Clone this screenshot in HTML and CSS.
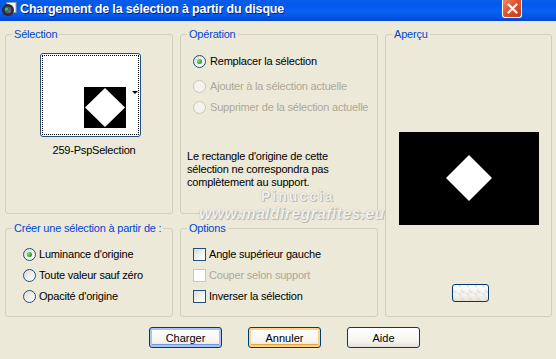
FILE: index.html
```html
<!DOCTYPE html>
<html lang="fr">

<head>
    <meta charset="utf-8">
    <link rel="stylesheet" href="styles.css">
</head>

<body>
    <div class="titlebar">
        <svg class="app-icon" width="16" height="16" viewBox="0 0 16 16">
            <rect x="6" y="1.5" width="9" height="10" fill="#fff" stroke="#9a9a9a" />
            <circle cx="7" cy="9" r="6" fill="#2a2a2a" />
            <circle cx="7" cy="9" r="3.5" fill="#3d5a8a" />
            <circle cx="5.5" cy="8" r="1.6" fill="#4fc04f" />
            <circle cx="8.5" cy="10.5" r="1.3" fill="#e04040" />
        </svg>
        <span class="title">Chargement de la sélection à partir du disque</span>
        <div class="close-btn">
            <svg width="11" height="11" viewBox="0 0 11 11">
                <path d="M1.5 1.5 L9.5 9.5 M9.5 1.5 L1.5 9.5" stroke="#fff" stroke-width="2.2" stroke-linecap="round" />
            </svg>
        </div>
    </div>

    <div class="dialog">
        <fieldset class="group sel-group">
            <legend>Sélection</legend>
            <div class="thumb">
                <div class="thumb-focus">
                    <svg class="thumb-img" width="42" height="41" viewBox="0 0 42 41">
                        <rect width="42" height="41" fill="#000" />
                        <polygon points="21,1 41,20.5 21,40 1,20.5" fill="#fff" />
                    </svg>
                    <span class="drop-arrow"></span>
                </div>
            </div>
            <div class="thumb-name">259-PspSelection</div>
        </fieldset>

        <fieldset class="group op-group">
            <legend>Opération</legend>
            <div class="op-list">
                <div class="option first"><span class="radio checked"></span>Remplacer la sélection</div>
                <div class="option second disabled"><span class="radio"></span>Ajouter à la sélection actuelle</div>
                <div class="option disabled"><span class="radio"></span>Supprimer de la sélection actuelle</div>
            </div>
            <p class="note">Le rectangle d'origine de cette<br>sélection ne correspondra pas<br>complètement au support.</p>
        </fieldset>

        <fieldset class="group preview-group">
            <legend>Aperçu</legend>
            <div class="preview">
                <svg width="140" height="93" viewBox="0 0 140 93">
                    <rect width="140" height="93" fill="#000" />
                    <polygon points="70,23 93,46 70,69 47,46" fill="#fff" />
                </svg>
            </div>
            <div class="mini-btn"></div>
        </fieldset>

        <fieldset class="group create-group">
            <legend>Créer une sélection à partir de :</legend>
            <div class="create-list">
                <div class="option"><span class="radio checked"></span>Luminance d'origine</div>
                <div class="option"><span class="radio"></span>Toute valeur sauf zéro</div>
                <div class="option"><span class="radio"></span>Opacité d'origine</div>
            </div>
        </fieldset>

        <fieldset class="group options-group">
            <legend>Options</legend>
            <div class="check-list">
                <div class="option"><span class="check"></span>Angle supérieur gauche</div>
                <div class="option disabled"><span class="check"></span>Couper selon support</div>
                <div class="option"><span class="check"></span>Inverser la sélection</div>
            </div>
        </fieldset>
    </div>

    <div class="buttons">
        <button class="btn default">Charger</button>
        <button class="btn hover">Annuler</button>
        <button class="btn">Aide</button>
    </div>

    <div class="wm wm-name">Pinuccia</div>
    <div class="wm wm-url">www.maldiregrafites.eu</div>
</body>

</html>
```

FILE: styles.css
```css
* {
    box-sizing: border-box;
}

body {
    margin: 0;
    width: 556px;
    height: 359px;
    overflow: hidden;
    position: relative;
    background: #ece9d8;
    font-family: 'Liberation Sans', Arial, sans-serif;
    font-size: 11px;
    line-height: 13px;
    letter-spacing: -0.2px;
    color: #000;
}

/* title bar */
.titlebar {
    height: 21px;
    display: flex;
    align-items: flex-start;
    background: linear-gradient(#0a5fe8 0%, #0058ee 20%, #0a62f0 55%, #0056e6 80%, #0047d0 100%);
    color: #fff;
}

.app-icon {
    margin: 1px 3px 0 1px;
}

.title {
    font-weight: bold;
    font-size: 12.5px;
    line-height: 18px;
    letter-spacing: -0.15px;
    text-shadow: 1px 1px 0 #0a1e84;
    flex: 1;
}

.close-btn {
    width: 20px;
    height: 18px;
    margin-right: 34px;
    border: 1px solid #fff;
    border-top: none;
    border-radius: 0 0 3px 3px;
    background: linear-gradient(135deg, #f08a6e, #e0512f 45%, #c83a1c);
    display: flex;
    align-items: center;
    justify-content: center;
}

/* groups */
.dialog {
    display: grid;
    grid-template-columns: 168px 198px 167px;
    grid-template-rows: 186px 95px;
    column-gap: 7px;
    row-gap: 8px;
    padding: 7px 0 0 5px;
}

.group {
    margin: 0;
    padding: 0;
    min-width: 0;
    border: 1px solid #d0d0bf;
    border-radius: 3px;
}

.group legend {
    margin-left: 6px;
    padding: 0 2px;
    color: #0046d5;
    line-height: 13px;
}

.preview-group {
    grid-column: 3;
    grid-row: 1 / span 2;
}

/* selection thumbnail */
.thumb {
    width: 101px;
    height: 84px;
    margin: 12px 0 0 34px;
    border: 1px solid #1c5180;
    border-radius: 3px;
    background: #fff;
    padding: 1px;
}

.thumb-focus {
    height: 100%;
    border: 1px dotted #000;
    display: flex;
    align-items: flex-end;
    padding: 0 0 6px 41px;
}

.drop-arrow {
    align-self: center;
    margin-left: 6px;
    width: 0;
    height: 0;
    border-left: 3px solid transparent;
    border-right: 3px solid transparent;
    border-top: 3px solid #000;
}

.thumb-name {
    margin-top: 7px;
    padding-left: 10px;
    text-align: center;
}

/* options and radios */
.option {
    display: flex;
    align-items: center;
    gap: 4px;
    height: 13px;
}

.option.disabled {
    color: #aca899;
}

.radio {
    width: 13px;
    height: 13px;
    border-radius: 50%;
    border: 1px solid #1c5180;
    background: linear-gradient(135deg, #dcd9cf, #f4f3ee 60%, #fff);
    display: flex;
    align-items: center;
    justify-content: center;
    flex-shrink: 0;
}

.radio.checked::after {
    content: "";
    width: 5px;
    height: 5px;
    border-radius: 50%;
    background: radial-gradient(circle at 35% 35%, #7fe07f, #21a121 70%);
}

.disabled .radio {
    border-color: #cac8bb;
    background: #f4f3ee;
}

.check {
    width: 13px;
    height: 13px;
    border: 1px solid #1c5180;
    background: linear-gradient(135deg, #dcdcd7, #f4f4f0 60%, #fff);
    flex-shrink: 0;
}

.disabled .check {
    border-color: #cac8bb;
    background: #fff;
}

.op-list {
    padding: 14px 0 0 12px;
}

.op-list .first {
    margin-bottom: 12px;
}

.op-list .second {
    margin-bottom: 8px;
}

.note {
    margin: 36px 0 0 6px;
}

.create-list {
    padding: 13px 0 0 17px;
    display: flex;
    flex-direction: column;
    gap: 8px;
}

.check-list {
    padding: 13px 0 0 12px;
    display: flex;
    flex-direction: column;
    gap: 8px;
}

.check-list .option,
.create-list .option {
    gap: 3px;
}

/* preview */
.preview {
    margin: 91px 0 0 13px;
    height: 93px;
}

.preview svg {
    display: block;
}

.mini-btn {
    width: 37px;
    height: 18px;
    margin: 59px 0 0 66px;
    border: 1px solid #003c74;
    border-radius: 3px;
    background:
        linear-gradient(45deg, rgba(220, 218, 210, 0.6) 25%, transparent 25%, transparent 75%, rgba(220, 218, 210, 0.6) 75%) 0 0 / 8px 8px,
        linear-gradient(#fff, #f3f2ec 60%, #e6e3d9);
}

/* dialog buttons */
.buttons {
    display: flex;
    gap: 26px;
    padding: 10px 0 0 149px;
}

.btn {
    width: 73px;
    height: 21px;
    padding: 0;
    border: 1px solid #003c74;
    border-radius: 3px;
    background: linear-gradient(#fff, #f5f4ef 70%, #e3e0d6);
    font-family: 'Liberation Sans', Arial, sans-serif;
    font-size: 11px;
    color: #000;
}

.btn.default {
    box-shadow: inset 0 0 0 2px #a9c4f0, inset 0 -1px 0 2px #6f97e0;
}

.btn.hover {
    box-shadow: inset 0 0 0 2px #fbd38a, inset 0 -1px 0 2px #eaa43c;
}

/* watermark over the dialog */
.wm {
    position: absolute;
    font-weight: bold;
    color: rgba(255, 255, 255, 0.85);
    text-shadow: 0 0 1px #9e9b8d, 1px 1px 0 #c2bfb0;
}

.wm-name {
    left: 261px;
    top: 190px;
    font-size: 14px;
    letter-spacing: 2px;
}

.wm-url {
    left: 199px;
    top: 207px;
    font-size: 16px;
    letter-spacing: 0.3px;
    font-style: italic;
}
```
